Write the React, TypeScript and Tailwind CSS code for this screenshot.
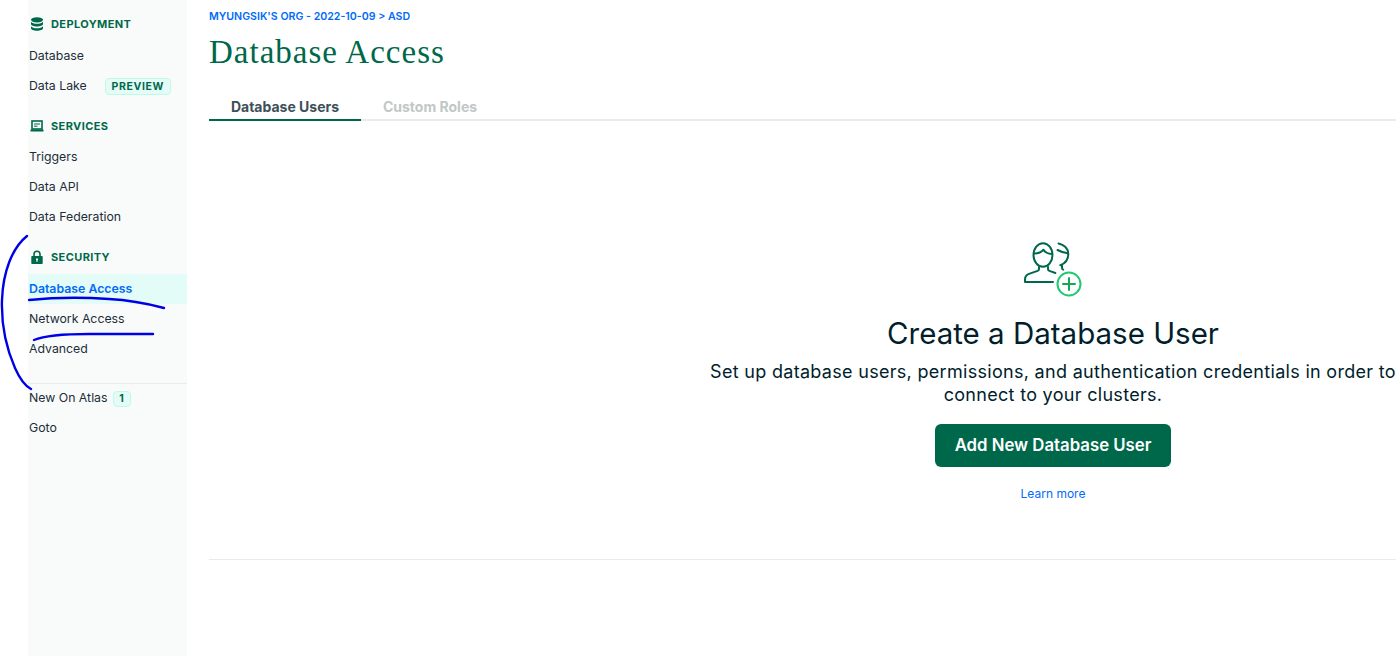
const font = { fontFamily: '"Inter", "Liberation Sans", sans-serif' };

function DbIcon() {
  return (
    <svg width="14" height="14" viewBox="0 0 14 14" fill="#00684a">
      <ellipse cx="7" cy="2.8" rx="6" ry="2.6" />
      <path d="M1 4.8c1.2 1.4 3.4 2 6 2s4.800-.6 6-2v2.200c0 1.400-2.700 2.500-6 2.500S1 8.400 1 7z" />
      <path d="M1 9.200c1.200 1.400 3.400 2 6 2s4.800-.6 6-2v2c0 1.400-2.700 2.500-6 2.500S1 12.600 1 11.200z" />
    </svg>
  );
}

function ServerIcon() {
  return (
    <svg width="14" height="14" viewBox="0 0 14 14" fill="none">
      <rect x="2" y="2" width="10" height="8" stroke="#00684a" strokeWidth="1.6" />
      <path d="M4 5h6M4 7.200h3.500" stroke="#00684a" strokeWidth="1" />
      <rect x="0.500" y="10.500" width="13" height="2" fill="#00684a" />
    </svg>
  );
}

function LockIcon() {
  return (
    <svg width="14" height="14" viewBox="0 0 14 14" fill="none">
      <path d="M4 6.500V4.200a3 3 0 0 1 6 0v2.300" stroke="#00684a" strokeWidth="1.600" />
      <path fillRule="evenodd" clipRule="evenodd" d="M2 6h10c.4 0 .7.300.7.700v6.600c0 .4-.3.700-.7.700H2c-.4 0-.7-.3-.7-.7V6.700c0-.4.300-.7.700-.7zM7 8.200a1.100 1.100 0 0 0-.6 2v1.500h1.200v-1.500a1.100 1.100 0 0 0-.6-2z" fill="#00684a" />
    </svg>
  );
}

function SectionTitle({ icon, label }: { icon: React.ReactNode; label: string }) {
  return (
    <div className="flex h-[20px] items-center pl-[2px] text-[11px] font-bold tracking-[0.4px] text-[#00684a]">
      <span className="flex w-[21px] items-center">{icon}</span>
      {label}
    </div>
  );
}

function NavItem({ label, active, children }: { label: string; active?: boolean; children?: React.ReactNode }) {
  return (
    <div className={`flex h-[30px] items-center pl-[1px] pt-[1px] text-[12.300px] ${active ? "bg-[#e3fcf7] font-semibold text-[#016bf8]" : "text-[#1c2d38]"}`}>
      {label}
      {children}
    </div>
  );
}

function UserPlusIcon() {
  return (
    <svg width="60" height="56" viewBox="0 0 60 56" fill="none">
      <g transform="translate(1 0)" stroke="#00684a" strokeWidth="2" strokeLinecap="round" strokeLinejoin="round">
        <ellipse cx="19" cy="14" rx="9.500" ry="11.700" />
        <path d="M10.500 12.500c4 0 7-1.200 9-3.800 1.500 2.500 4.500 4 8.500 4.300" />
        <path d="M15 26v2c0 .9-.5 1.500-1.400 1.900l-8.600 3C2.500 33.900 1 35.800 1 38.500V41h28" />
        <path d="M24 26v2c0 .9.500 1.500 1.400 1.900l6 2.100" />
        <path d="M34.500 2.500c5.500 1 9.800 5 9.800 10.500 0 5.500-3.300 9.500-8 11.200" />
        <path d="M33.500 9c2.800 1.500 5.500 2.800 10.500 3.200" />
        <path d="M38 24.500v2.500c0 .8.400 1.300 1.200 1.600" />
      </g>
      <circle cx="46" cy="43" r="11.500" stroke="#1fc96f" strokeWidth="2" />
      <path d="M46 37v12M40 43h12" stroke="#13aa52" strokeWidth="2" strokeLinecap="round" />
    </svg>
  );
}

export default function App() {
  return (
    <div className="relative h-[656px] w-[1396px] overflow-hidden bg-white text-[#001e2b]" style={font}>
      <div className="ml-[28px] flex h-full">
        <aside className="flex w-[159px] shrink-0 flex-col bg-[#f9fbfa] pt-[14px]">
          <SectionTitle icon={<DbIcon />} label="DEPLOYMENT" />
          <div className="mt-[7px]">
            <NavItem label="Database" />
            <NavItem label="Data Lake">
              <span className="ml-[18px] flex h-[17px] w-[66px] items-center justify-center rounded-[4px] border border-[#c0fae6] bg-[#e3fcf7] text-[10.500px] font-bold tracking-[0.6px] text-[#00684a]">
                PREVIEW
              </span>
            </NavItem>
          </div>
          <div className="mt-[15px]">
            <SectionTitle icon={<ServerIcon />} label="SERVICES" />
          </div>
          <div className="mt-[6px]">
            <NavItem label="Triggers" />
            <NavItem label="Data API" />
            <NavItem label="Data Federation" />
          </div>
          <div className="mt-[15px]">
            <SectionTitle icon={<LockIcon />} label="SECURITY" />
          </div>
          <div className="mt-[7px]">
            <NavItem label="Database Access" active />
            <NavItem label="Network Access" />
            <NavItem label="Advanced" />
          </div>
          <div className="mt-[19px] border-t border-[#e8edeb]">
            <div className="-mt-[1px]">
              <NavItem label="New On Atlas">
                <span className="ml-[5px] flex h-[16px] w-[18px] items-center justify-center rounded-[4px] border border-[#c0fae6] bg-[#e3fcf7] text-[10.500px] font-bold text-[#00684a]">
                  1
                </span>
              </NavItem>
              <NavItem label="Goto" />
            </div>
          </div>
        </aside>

        <main className="ml-[22px] w-[1688px] shrink-0">
          <div className="pt-[10px] text-[10.600px] font-semibold leading-[14px] text-[#016bf8]">
            MYUNGSIK'S ORG - 2022-10-09 &gt; ASD
          </div>
          <h1 className="mt-[8px] text-[33px] font-normal leading-[40px] tracking-[1px] text-[#00684a]" style={{ fontFamily: '"Liberation Serif", serif' }}>
            Database Access
          </h1>
          <div className="mt-[13px] flex h-[36px] items-end">
            <div className="flex h-full w-[152px] items-center justify-center border-b-[2px] border-[#00684a] pt-[8px] text-[14px] font-bold text-[#3d4f58]">
              Database Users
            </div>
            <div className="flex h-full w-[138px] items-center justify-center border-b-[2px] border-[#e8edeb] pt-[8px] text-[14px] font-bold text-[#c1c7c6]">
              Custom Roles
            </div>
            <div className="h-[2px] flex-1 bg-[#e8edeb]" />
          </div>
          <div className="flex h-[439px] flex-col items-center border-b border-[#e8edeb] pt-[120px]">
            <UserPlusIcon />
            <h2 className="mt-[18px] text-[29.500px] font-normal leading-[36px] text-[#001e2b]">Create a Database User</h2>
            <p className="mt-[9px] w-[700px] text-center text-[18px] leading-[23px] tracking-[0.3px] text-[#001e2b]">
              Set up database users, permissions, and authentication credentials in order to connect to your clusters.
            </p>
            <button className="mt-[18px] flex h-[43px] w-[236px] items-center justify-center rounded-[6px] bg-[#00684a] text-[16.750px] font-semibold text-white">
              Add New Database User
            </button>
            <a className="mt-[19px] text-[12px] leading-[16px] text-[#016bf8]">Learn more</a>
          </div>
        </main>
      </div>

      <svg className="pointer-events-none absolute left-0 top-0" width="200" height="400" fill="none" stroke="#0000e6" strokeWidth="2.400" strokeLinecap="round">
        <path d="M27 236C12 248 3 272 2 300c-1 30 6 52 13 68 4 9 10 18 16 21" />
        <path d="M29 300c20-2 50-3 80-1 20 1 40 5 55 9" />
        <path d="M34 340c12-5 30-6 55-6h64" />
      </svg>
    </div>
  );
}
